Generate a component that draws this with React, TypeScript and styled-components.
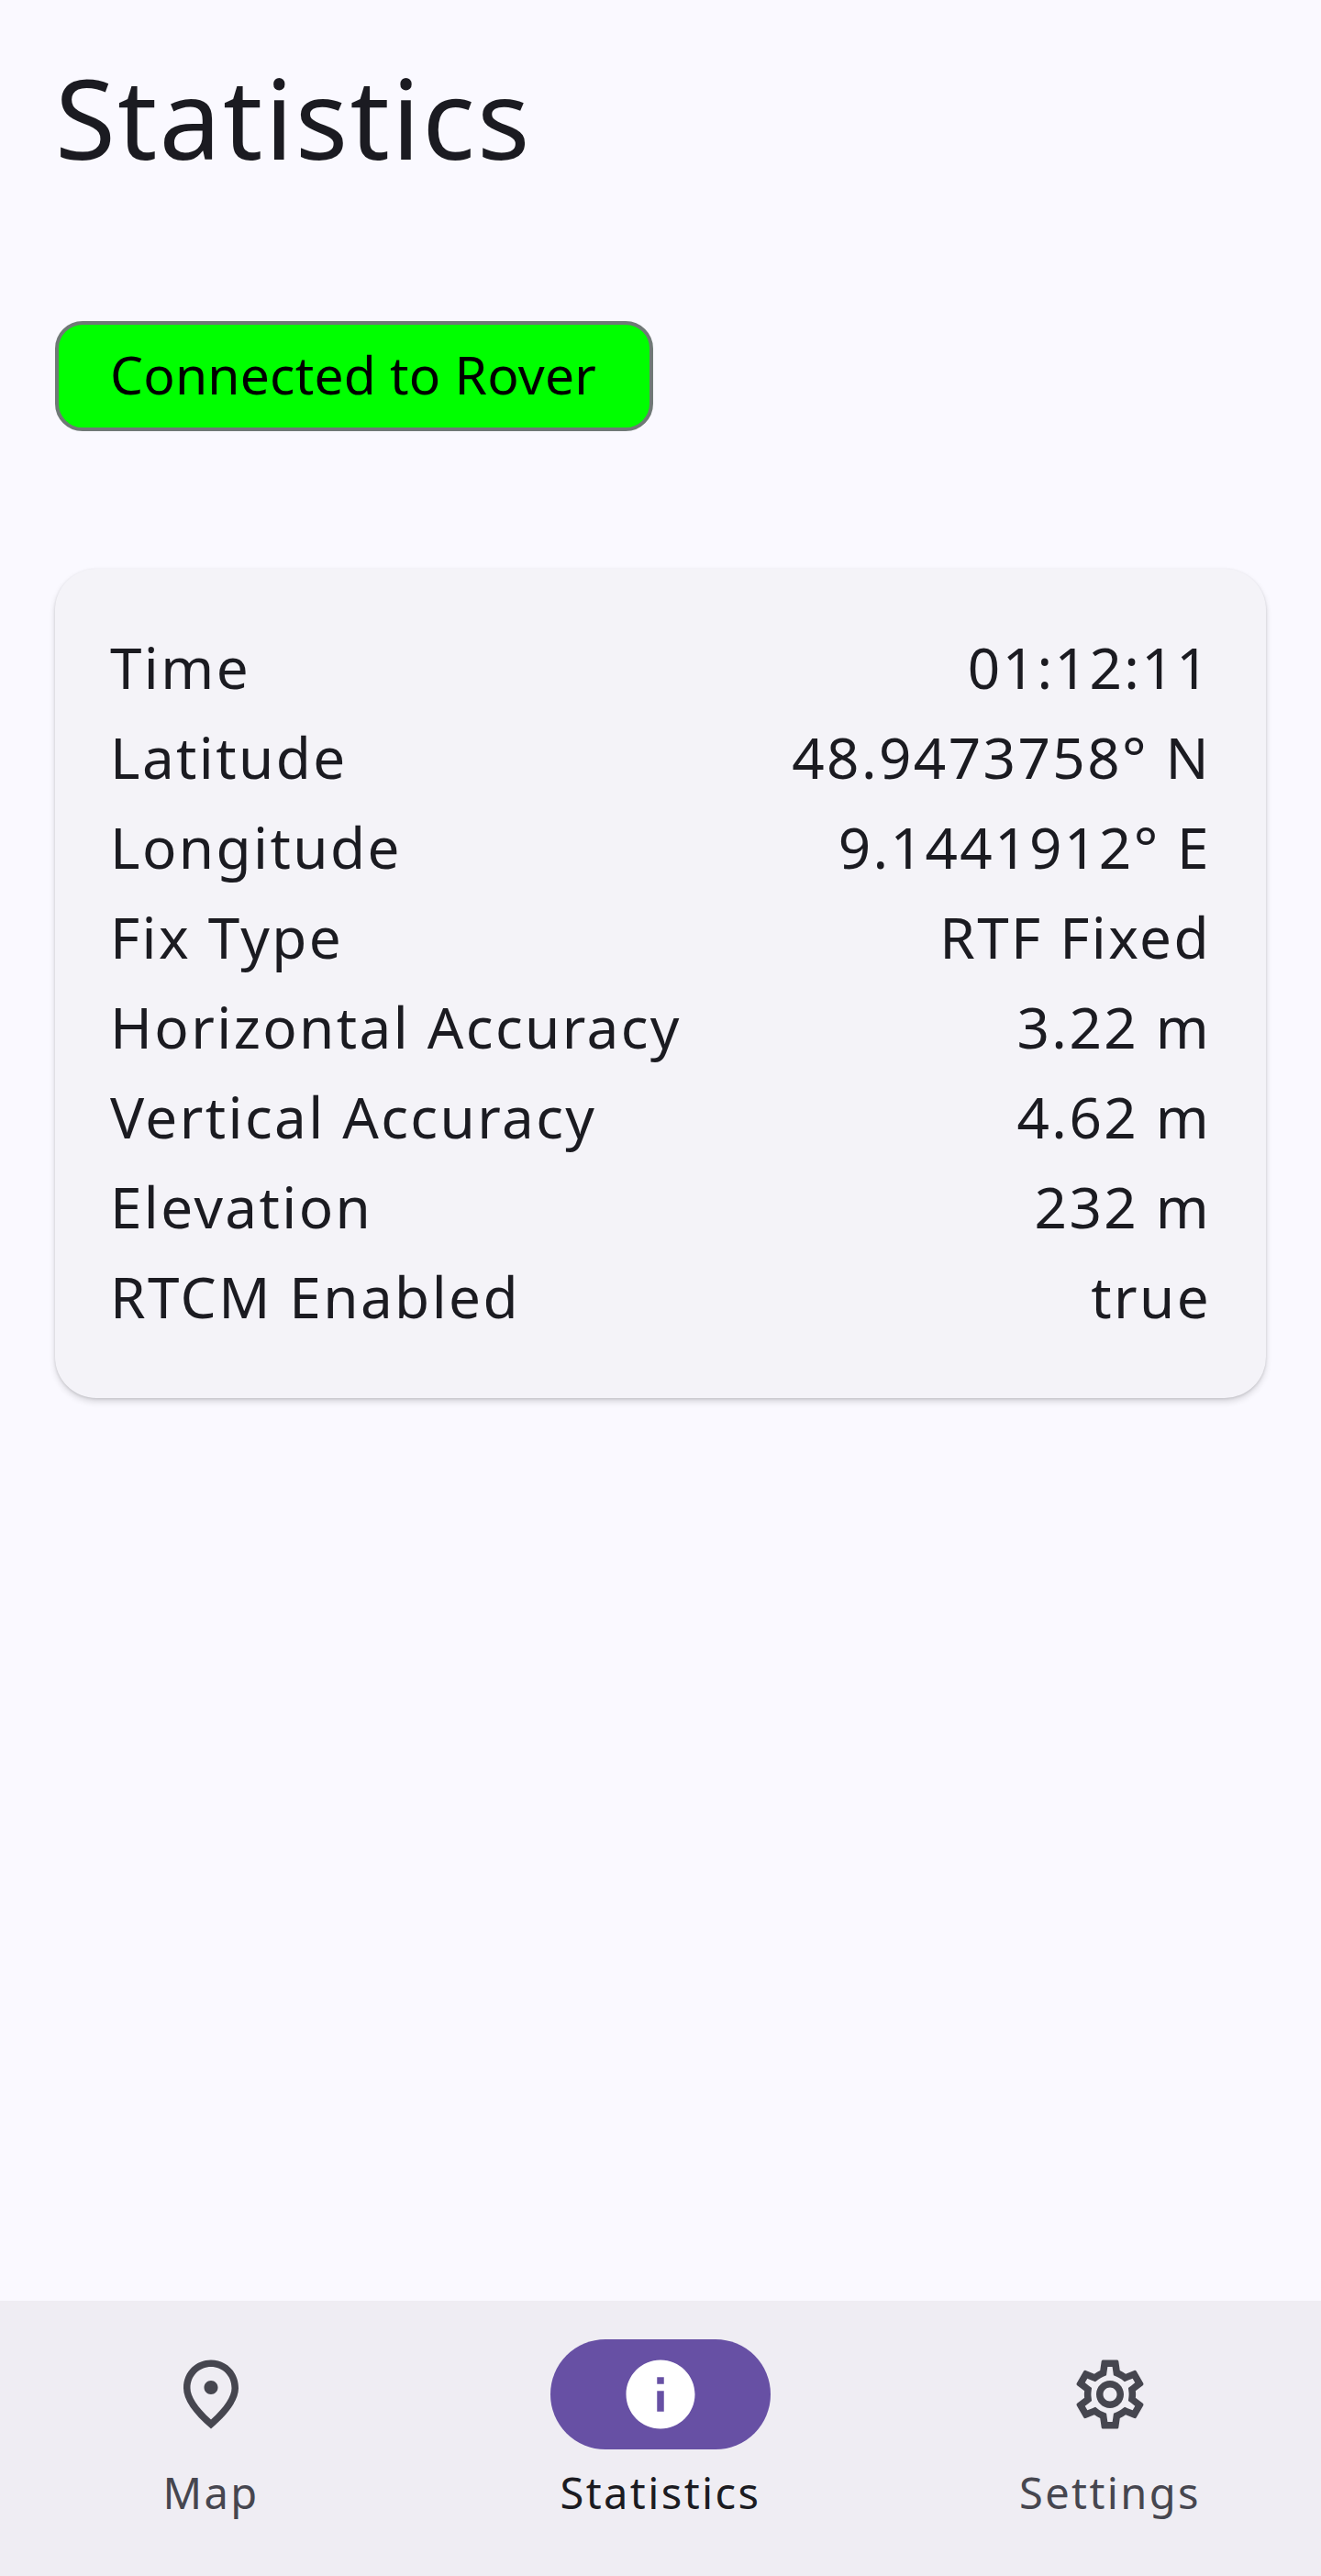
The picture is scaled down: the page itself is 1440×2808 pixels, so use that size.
import React from 'react';
import styled, { createGlobalStyle } from 'styled-components';

const stats = [
  { label: 'Time', value: '01:12:11' },
  { label: 'Latitude', value: '48.9473758° N' },
  { label: 'Longitude', value: '9.1441912° E' },
  { label: 'Fix Type', value: 'RTF Fixed' },
  { label: 'Horizontal Accuracy', value: '3.22 m' },
  { label: 'Vertical Accuracy', value: '4.62 m' },
  { label: 'Elevation', value: '232 m' },
  { label: 'RTCM Enabled', value: 'true' },
];

const PIN =
  'M12 12c-1.1 0-2-.9-2-2s.9-2 2-2 2 .9 2 2-.9 2-2 2zm6-1.8C18 6.57 15.35 4 12 4s-6 2.57-6 6.2c0 2.34 1.95 5.44 6 9.14 4.05-3.7 6-6.8 6-9.14zM12 2c4.2 0 8 3.22 8 8.2 0 3.32-2.67 7.25-8 11.8-5.33-4.55-8-8.48-8-11.8C4 5.22 7.8 2 12 2z';
const INFO =
  'M12 2C6.48 2 2 6.48 2 12s4.48 10 10 10 10-4.48 10-10S17.52 2 12 2zm1 15h-2v-6h2v6zm0-8h-2V7h2v2z';
const GEAR =
  'M19.43 12.98c.04-.32.07-.64.07-.98 0-.34-.03-.66-.07-.98l2.11-1.65c.19-.15.24-.42.12-.64l-2-3.46c-.09-.16-.26-.25-.44-.25-.06 0-.12.01-.17.03l-2.49 1c-.52-.4-1.08-.73-1.69-.98l-.38-2.65C14.46 2.18 14.25 2 14 2h-4c-.25 0-.46.18-.49.42l-.38 2.65c-.61.25-1.17.59-1.69.98l-2.49-1c-.06-.02-.12-.03-.18-.03-.17 0-.34.09-.43.25l-2 3.46c-.13.22-.07.49.12.64l2.11 1.65c-.04.32-.07.65-.07.98 0 .33.03.66.07.98l-2.11 1.65c-.19.15-.24.42-.12.64l2 3.46c.09.16.26.25.44.25.06 0 .12-.01.17-.03l2.49-1c.52.4 1.08.73 1.69.98l.38 2.65c.03.24.24.42.49.42h4c.25 0 .46-.18.49-.42l.38-2.65c.61-.25 1.17-.59 1.69-.98l2.49 1c.06.02.12.03.18.03.17 0 .34-.09.43-.25l2-3.46c.12-.22.07-.49-.12-.64l-2.11-1.65zm-1.98-1.71c.04.31.05.52.05.73 0 .21-.02.43-.05.73l-.14 1.13.89.7 1.08.84-.7 1.21-1.27-.51-1.04-.42-.9.68c-.43.32-.84.56-1.25.73l-1.06.43-.16 1.13-.2 1.35h-1.4l-.19-1.35-.16-1.13-1.06-.43c-.43-.18-.83-.41-1.23-.71l-.91-.7-1.06.43-1.27.51-.7-1.21 1.08-.84.89-.7-.14-1.13c-.03-.31-.05-.54-.05-.74s.02-.43.05-.73l.14-1.13-.89-.7-1.08-.84.7-1.21 1.27.51 1.04.42.9-.68c.43-.32.84-.56 1.25-.73l1.06-.43.16-1.13.2-1.35h1.39l.19 1.35.16 1.13 1.06.43c.43.18.83.41 1.23.71l.91.7 1.06-.43 1.27-.51.7 1.21-1.07.85-.89.7.14 1.13zM12 8c-2.21 0-4 1.79-4 4s1.79 4 4 4 4-1.79 4-4-1.79-4-4-4zm0 6c-1.1 0-2-.9-2-2s.9-2 2-2 2 .9 2 2-.9 2-2 2z';

const destinations = [
  { label: 'Map', icon: PIN, active: false },
  { label: 'Statistics', icon: INFO, active: true },
  { label: 'Settings', icon: GEAR, active: false },
];

export default function App() {
  return (
    <>
      <GlobalStyle />
      <Screen>
        <Content>
          <Title>Statistics</Title>
          <ConnectionBadge>Connected to Rover</ConnectionBadge>
          <StatsCard>
            {stats.map((s) => (
              <StatRow key={s.label}>
                <span>{s.label}</span>
                <span>{s.value}</span>
              </StatRow>
            ))}
          </StatsCard>
        </Content>
        <NavBar>
          {destinations.map((d) => (
            <NavItem key={d.label}>
              <Indicator $active={d.active}>
                <svg width="90" height="90" viewBox="0 0 24 24" fill="currentColor">
                  <path d={d.icon} />
                </svg>
              </Indicator>
              <NavLabel $active={d.active}>{d.label}</NavLabel>
            </NavItem>
          ))}
        </NavBar>
      </Screen>
    </>
  );
}

const GlobalStyle = createGlobalStyle`
  html, body {
    margin: 0;
    padding: 0;
    background: #faf9ff;
  }
`;

const Screen = styled.div`
  width: 1440px;
  height: 2808px;
  display: flex;
  flex-direction: column;
  overflow: hidden;
  background: #faf9ff;
  color: #1b1b21;
  font-family: 'Noto Sans', sans-serif;
`;

const Content = styled.main`
  flex: 1;
  display: flex;
  flex-direction: column;
  align-items: flex-start;
  padding: 60px 60px 0;
`;

const Title = styled.h1`
  margin: 0;
  font-size: 120px;
  line-height: 136px;
  font-weight: 400;
  letter-spacing: 2.2px;
`;

const ConnectionBadge = styled.div`
  margin-top: 154px;
  box-sizing: border-box;
  height: 120px;
  padding: 0 58px 4px 56px;
  display: flex;
  align-items: center;
  background: #00ff00;
  border: 4px solid #6f7976;
  border-radius: 30px;
  color: #000;
  font-size: 57px;
  letter-spacing: 0.2px;
`;

const StatsCard = styled.section`
  margin-top: 150px;
  box-sizing: border-box;
  width: 1320px;
  padding: 58px 60px 62px;
  display: flex;
  flex-direction: column;
  background: #f4f3f8;
  border-radius: 45px;
  box-shadow: 0 4px 7px rgba(0, 0, 0, 0.14), 0 1px 3px rgba(0, 0, 0, 0.12);
`;

const StatRow = styled.div`
  display: flex;
  justify-content: space-between;
  font-size: 62px;
  line-height: 98px;
  letter-spacing: 2.4px;
`;

const NavBar = styled.nav`
  flex: none;
  height: 300px;
  display: grid;
  grid-template-columns: repeat(3, 490px);
  justify-content: center;
  background: #efedf3;
`;

const NavItem = styled.div`
  display: flex;
  flex-direction: column;
  align-items: center;
  padding-top: 42px;
`;

const Indicator = styled.div<{ $active: boolean }>`
  width: 240px;
  height: 120px;
  display: flex;
  align-items: center;
  justify-content: center;
  border-radius: 60px;
  background: ${(p) => (p.$active ? '#6750a4' : 'transparent')};
  color: ${(p) => (p.$active ? '#ffffff' : '#46464f')};
`;

const NavLabel = styled.span<{ $active: boolean }>`
  margin-top: 11px;
  font-size: 47px;
  line-height: 72px;
  letter-spacing: 2.4px;
  color: ${(p) => (p.$active ? '#1b1b21' : '#46464f')};
`;
